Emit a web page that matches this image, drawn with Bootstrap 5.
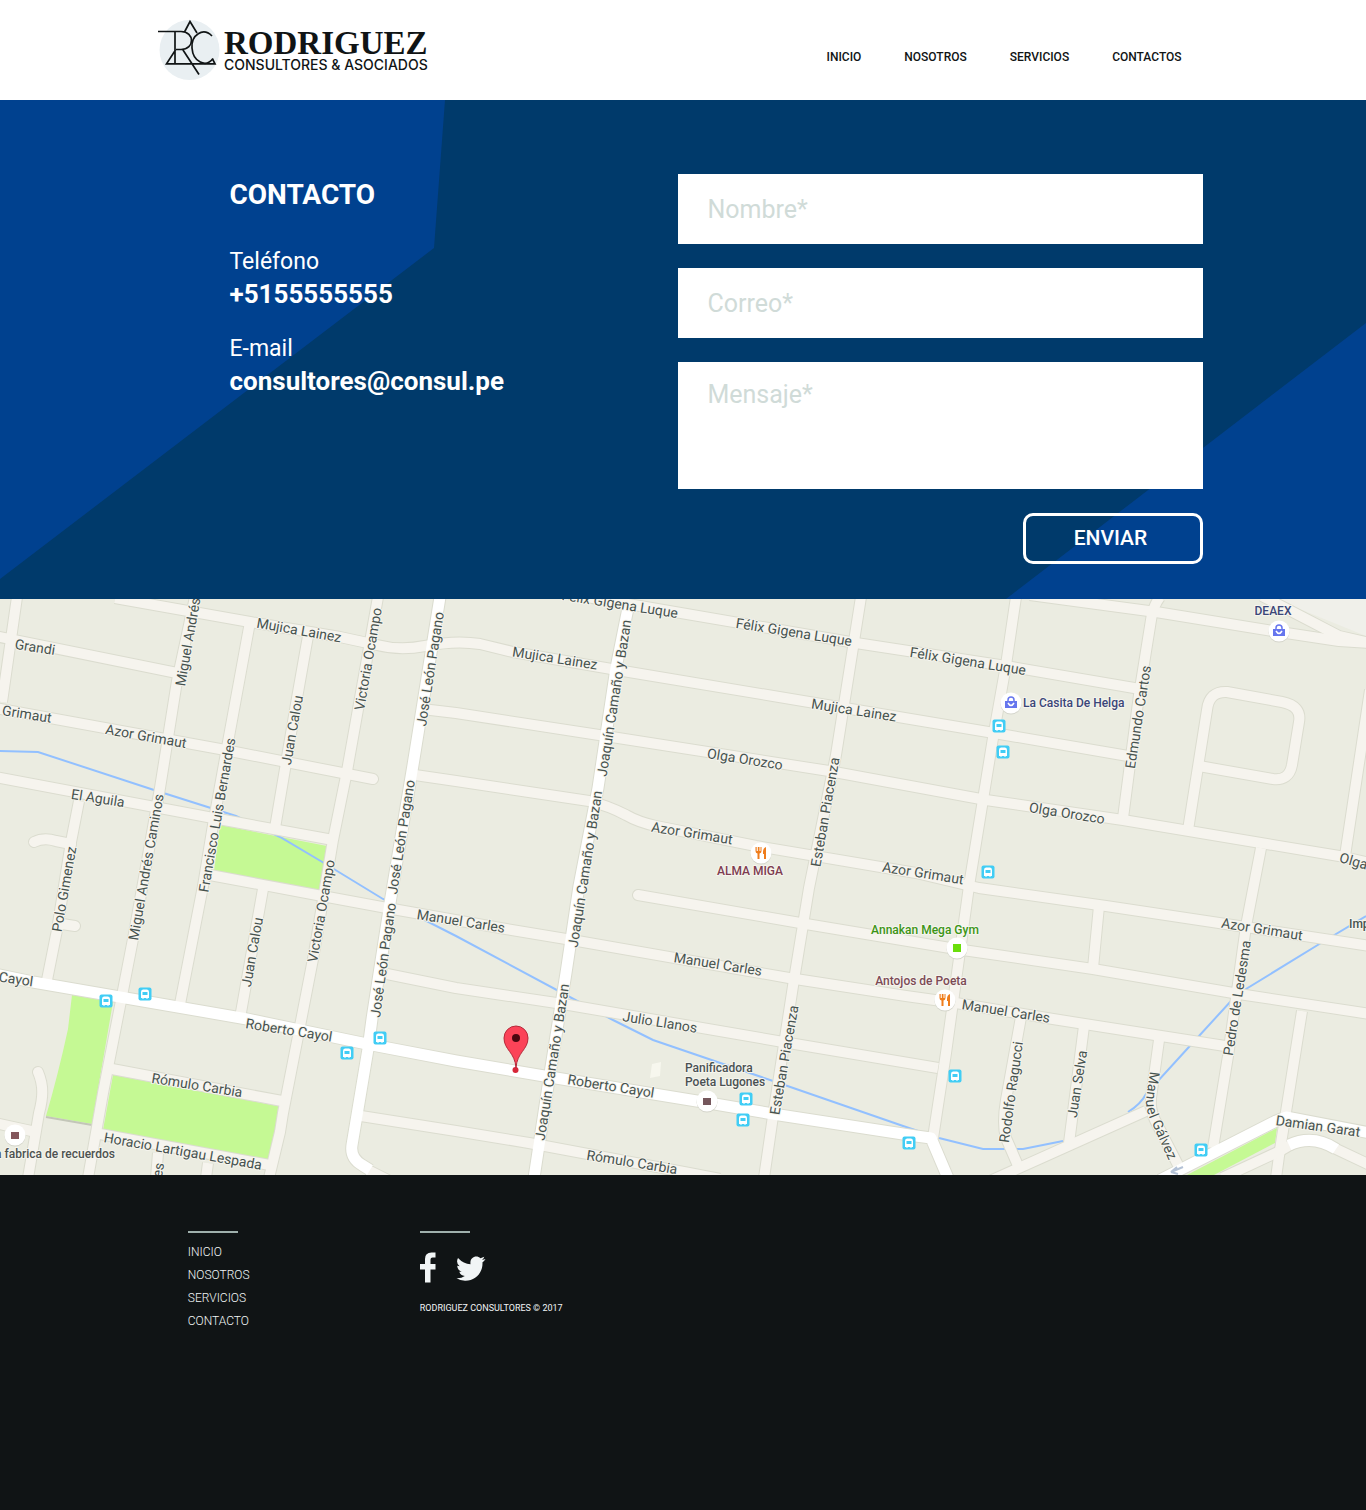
<!DOCTYPE html>
<html lang="es">
<head>
<meta charset="utf-8">
<meta name="viewport" content="width=device-width, initial-scale=1">
<title>Rodriguez Consultores &amp; Asociados - Contacto</title>
<link href="https://cdn.jsdelivr.net/npm/bootstrap@5.3.0/dist/css/bootstrap.min.css" rel="stylesheet">
<style>
body{font-family:Roboto,"Liberation Sans",sans-serif;background:#101415}
.site-header{background:#fff;min-height:100px;padding:0 13.5% 0 11.6%}
.site-logo{width:280px;height:64px;display:block}
.logo-name{font:bold 33px "Liberation Serif",serif;fill:#101415}
.logo-sub{font:500 14px Inter,sans-serif;fill:#101415}
.site-menu{gap:43px;padding-top:13px}
.site-menu .nav-link{padding:0;font-size:12px;font-weight:500;line-height:20px;color:#101415}
.site-menu .nav-link:hover{color:#00418f}
.contact-band{background:#003a6b;color:#fff;padding:74px 11.9% 35px 16.8%}
.contact-shapes{fill:#00418f}
.contact-inner{position:relative}
.contact-data{flex:1 1 280px}
.contact-form{flex:0 1 525px;display:flex;flex-direction:column;gap:24px}
.contact-title{font-size:28px;font-weight:700;line-height:42px;margin-bottom:30px}
.data-label{font-size:23px;line-height:32px}
.data-value{font-size:26px;line-height:32px;font-weight:700;margin-bottom:23px}
.data-value a{color:#fff;text-decoration:none}
.contact-form .form-control{border:0;border-radius:0;height:70px;padding:0 29px;font-size:25px;line-height:32px;color:#003a6b}
.contact-form textarea.form-control{height:127px;padding:17px 29px;resize:none}
.contact-form .form-control::placeholder{color:#d0dbd8}
.btn-send{width:180px;height:51px;border:3px solid #fff;border-radius:10px;color:#fff;font-size:21px;font-weight:500;line-height:1;padding:0 6px 0 0}
.btn-send:hover{background:#fff;color:#003a6b}
.street-map{display:block;width:100%;height:auto;background:#ebece1}
.street-map text{font-family:Roboto,sans-serif;paint-order:stroke;stroke:#f6f5ee;stroke-width:2px;stroke-linejoin:round}
.streets text{font-size:14px;fill:#46524f;text-anchor:middle;dominant-baseline:central}
.streets .from-start{text-anchor:start}
.places text{font-size:12px;font-weight:500;text-anchor:middle}
.places .from-start{text-anchor:start}
.places .from-end{text-anchor:end}
.site-footer{background:#101415;color:#f1f5f6;padding:56px 13.5% 24px 13.75%;min-height:335px}
.footer-col{width:232px}
.footer-rule{width:50px;height:2px;background:#9fb0ac}
.footer-menu{padding-top:8px}
.footer-menu a{display:block;font-size:12px;font-weight:300;line-height:23px;color:#f1f5f6;text-decoration:none}
.footer-social{gap:20px;padding-top:19px;padding-bottom:18px}
.footer-social a{display:block;color:#f1f5f6}
.footer-social svg{display:block;fill:currentColor}
.footer-copy{font-size:9px;line-height:14px;white-space:nowrap}
</style>
<script src="https://cdn.jsdelivr.net/npm/bootstrap@5.3.0/dist/js/bootstrap.bundle.min.js"></script>
</head>
<body class="d-flex flex-column min-vh-100">

<header class="site-header d-flex flex-wrap align-items-center justify-content-between">
  <a href="#" aria-label="Rodriguez Consultores y Asociados">
    <svg class="site-logo" viewBox="158 18 280 64">
      <circle cx="189.500" cy="50" r="30" fill="#e9eff2"/>
      <g fill="none" stroke="#101415" stroke-width="1.700">
        <path d="M158 31.500H181C195 31.500 195 49.500 181 49.500H176M175 32V63.500M183 50L199 74.500M184.500 32L190 21.500L197 33M175.500 50L166.500 63.800H215L212.500 59"/>
        <path d="M212 36C203 27 191 35 192 48C193 62 206 68 213 58.500"/>
      </g>
      <text class="logo-name" x="224" y="54">RODRIGUEZ</text>
      <text class="logo-sub" x="224" y="70">CONSULTORES &amp; ASOCIADOS</text>
    </svg>
  </a>
  <nav class="nav site-menu">
    <a class="nav-link" href="#">INICIO</a>
    <a class="nav-link" href="#">NOSOTROS</a>
    <a class="nav-link" href="#">SERVICIOS</a>
    <a class="nav-link" href="#">CONTACTOS</a>
  </nav>
</header>

<main>
  <section class="contact-band position-relative">
    <svg class="contact-shapes position-absolute top-0 start-0 w-100 h-100" viewBox="0 0 1366 499" preserveAspectRatio="none" aria-hidden="true">
      <path d="M0 0H445L434 148L0 479ZM1366 223V499H1006Z"/>
    </svg>
    <div class="contact-inner d-flex flex-wrap justify-content-between">
      <div class="contact-data">
        <h1 class="contact-title">CONTACTO</h1>
        <div class="data-label">Teléfono</div>
        <div class="data-value"><a href="tel:+5155555555">+5155555555</a></div>
        <div class="data-label">E-mail</div>
        <div class="data-value"><a href="mailto:consultores@consul.pe">consultores@consul.pe</a></div>
      </div>
      <form class="contact-form">
        <input class="form-control" type="text" placeholder="Nombre*" aria-label="Nombre">
        <input class="form-control" type="email" placeholder="Correo*" aria-label="Correo">
        <textarea class="form-control" placeholder="Mensaje*" aria-label="Mensaje"></textarea>
        <button class="btn btn-send align-self-end" type="button">ENVIAR</button>
      </form>
    </div>
  </section>

  <svg class="street-map" viewBox="0 599 1366 576" role="img" aria-label="Mapa de ubicación">
    <defs>
      <g id="minor">
        <path d="M115 598L250 622L340 637L377 645Q400 651 425 646Q456 640 480 644L513 652L623 671L809 702L994 733L1128 756"/>
        <path d="M569 594L640 606L856 643L1006 666L1140 689"/>
        <path d="M1030 595L1156 612L1273 631L1339 641L1370 643"/>
        <path d="M1262 596L1339 636L1370 643"/>
        <path d="M-5 636L177 673M17 597L2 702"/>
        <path d="M-5 708L220 749L373 779" stroke-linecap="round"/>
        <path d="M-5 777L213 818L333 840"/>
        <path d="M195 597L177 681L160 788L133 939L120 1006L103 1093L88 1178"/>
        <path d="M250 622L230 731L213 825L203 886L180 1004"/>
        <path d="M308 636L297 698L275 828M263 889L240 1018"/>
        <path d="M378 597L347 771L333 840L313 959L300 1026L283 1113L280 1132L269 1178"/>
        <path d="M79 801L71 842L57 930L47 980"/>
        <path d="M34 842Q44 837 56 841L71 844M62 924L75 926" stroke-linecap="round"/>
        <path d="M210 875L333 898L387 908L506 929L566 939L789 978L906 996L956 1003L1053 1019L1225 1046"/>
        <path d="M112 1069L282 1101M100 1134L275 1166M-5 1123L36 1132M158 1153L156 1178M208 1163L206 1178"/>
        <path d="M38 1072C44 1086 43 1098 39 1113L28 1178" stroke-linecap="round"/>
        <path d="M422 709L456 713L599 735L829 771L986 800L1123 820L1189 831L1339 856L1370 863"/>
        <path d="M415 775L456 781L589 801Q609 806 626 815Q638 822 656 826L756 846L916 873L979 888L1106 906L1239 926L1370 946"/>
        <path d="M638 895L806 924L956 949L1093 969L1239 994L1370 1014" stroke-linecap="round"/>
        <path d="M387 974L456 988L563 1004L789 1043L938 1068"/>
        <path d="M361 1116L456 1131L529 1143L689 1173L720 1179M368 1170L388 1180"/>
        <path d="M861 597L836 755L809 888L793 986L773 1116L764 1178"/>
        <path d="M1016 597L1006 665L993 738L969 886L946 1053L933 1138"/>
        <path d="M1160 597Q1153 606 1151 620L1139 695L1123 818"/>
        <path d="M1188 830L1207 710Q1209 691 1227 692L1282 702Q1302 706 1299 722L1292 765Q1289 781 1273 779L1199 766"/>
        <path d="M1370 690L1345 856M1261 848L1246 926L1228 1056L1213 1148"/>
        <path d="M1099 906L1093 968M1302 1011L1279 1156L1276 1178"/>
        <path d="M1021 1017L1006 1100Q1002 1124 1006 1138L1019 1168M1084 1026L1069 1143"/>
        <path d="M1159 1040L1151 1098Q1150 1110 1155 1120L1178 1165"/>
        <path d="M990 1181L1146 1111M1222 1178L1280 1151L1292 1144M1334 1148L1370 1165"/>
      </g>
      <g id="major">
        <path d="M440 597L413 765L390 903L372 1019L368 1049L352 1145Q350 1158 362 1165L370 1170"/>
        <path d="M-5 974L33 982L247 1019L367 1044L456 1061L556 1078L709 1103L773 1114L916 1136L931 1138L948 1178"/>
        <path d="M628 608L616 668L598 788L579 886L566 973L548 1086L534 1178"/>
        <path d="M1160 1180L1276 1121L1286 1117L1370 1133M1289 1145Q1313 1134 1336 1149"/>
      </g>
      <g id="bus">
        <rect x="-6.500" y="-6.500" width="13" height="13" rx="2" fill="#41cdf5"/>
        <path d="M-4 4V-2Q-4 -4.500 -2 -4.500H2Q4 -4.500 4 -2V4H2.500V5H1.500V4H-1.500V5H-2.500V4Z" fill="#fff"/>
        <path d="M-2.500 -2H2.500V1H-2.500Z" fill="#41cdf5"/>
      </g>
      <g id="disc">
        <circle cy="1" r="10.500" fill="#d4d5cb"/>
        <circle r="10.500" fill="#fff"/>
      </g>
      <g id="fork">
        <use href="#disc"/>
        <path d="M-5.500 -6V-2Q-5.500 0 -3.500 .5V6H-1.500V.5Q.5 0 .5 -2V-6H-.5V-2H-1.500V-6H-3.200V-2H-4.300V-6ZM5 -6Q2 -5 2 -1V1H3V6H5Z" fill="#ef7d1c"/>
      </g>
      <g id="bag">
        <use href="#disc"/>
        <path d="M-6 -2H6V5H-6Z" fill="#6676ee"/>
        <path d="M-3 -2V-3Q-3 -6 0 -6Q3 -6 3 -3V-2" fill="none" stroke="#6676ee" stroke-width="1.500"/>
        <path d="M-3 0Q0 5 3 0" fill="none" stroke="#fff" stroke-width="1.500"/>
      </g>
    </defs>

    <path d="M1275 599H1366V636Z" fill="#f0f0ea"/>
    <g fill="#c5f994">
      <path d="M220 825L327 846L320 890L214 871Z"/>
      <path d="M72 995L113 1002L92 1124L46 1116Q58 1075 68 1029Z"/>
      <path d="M113 1075L278 1106Q278 1138 267 1162L103 1130Z"/>
      <path d="M1187 1175L1277 1128L1275 1143L1214 1175Z"/>
    </g>
    <path d="M46 1117L92 1125" stroke="#c3c6b8" stroke-width="2"/>
    <g fill="none" stroke="#92c0ff" stroke-width="2">
      <path d="M0 751L38 752L154 790L236 816L280 837L324 863L383 899L456 936L581 1003L613 1020L653 1040L773 1081L906 1127L939 1138L983 1149H1023L1063 1141"/>
      <path d="M1128 1112Q1141 1104 1146 1094L1188 1048L1231 1001L1246 989L1321 943L1366 916"/>
    </g>
    <g fill="none" stroke-linejoin="round">
      <use href="#minor" stroke="#dbdccf" stroke-width="12"/>
      <use href="#major" stroke="#dbdccf" stroke-width="13"/>
      <use href="#minor" stroke="#f6f4ee" stroke-width="10"/>
      <use href="#major" stroke="#fff" stroke-width="11"/>
    </g>
    <path d="M652 1064L661 1062L660 1076L650 1078Z" fill="#f7f7ee"/>
    <path d="M1183 1167L1171 1172L1177 1167M1171 1172L1178 1174" fill="none" stroke="#b4c2d6" stroke-width="2"/>

    <g class="streets">
      <text transform="translate(299 630) rotate(10)">Mujica Lainez</text>
      <text transform="translate(35 647) rotate(9)">Grandi</text>
      <text transform="translate(27 714) rotate(9)">Grimaut</text>
      <text transform="translate(146 736) rotate(10)">Azor Grimaut</text>
      <text transform="translate(98 798) rotate(9)">El Aguila</text>
      <text class="from-start" transform="translate(180 686) rotate(-80)">Miguel Andrés</text>
      <text transform="translate(146 867) rotate(-80)">Miguel Andrés Caminos</text>
      <text transform="translate(217 815) rotate(-80)">Francisco Luis Bernardes</text>
      <text transform="translate(292 730) rotate(-80)">Juan Calou</text>
      <text transform="translate(252 952) rotate(-80)">Juan Calou</text>
      <text transform="translate(368 659) rotate(-80)">Victoria Ocampo</text>
      <text transform="translate(321 911) rotate(-80)">Victoria Ocampo</text>
      <text transform="translate(430 669) rotate(-81)">José León Pagano</text>
      <text transform="translate(401 837) rotate(-81)">José León Pagano</text>
      <text transform="translate(383 960) rotate(-82)">José León Pagano</text>
      <text transform="translate(64 889) rotate(-80)">Polo Gimenez</text>
      <text transform="translate(620 604) rotate(9)">Félix Gigena Luque</text>
      <text transform="translate(794 632) rotate(9)">Félix Gigena Luque</text>
      <text transform="translate(968 661) rotate(9)">Félix Gigena Luque</text>
      <text transform="translate(614 698) rotate(-81)">Joaquín Camaño y Bazan</text>
      <text transform="translate(585 869) rotate(-81)">Joaquín Camaño y Bazan</text>
      <text transform="translate(552 1062) rotate(-81)">Joaquín Camaño y Bazan</text>
      <text transform="translate(555 658) rotate(9)">Mujica Lainez</text>
      <text transform="translate(854 710) rotate(9)">Mujica Lainez</text>
      <text transform="translate(745 759) rotate(9)">Olga Orozco</text>
      <text transform="translate(1067 813) rotate(9)">Olga Orozco</text>
      <text class="from-start" transform="translate(1340 857) rotate(16)">Olga</text>
      <text transform="translate(692 833) rotate(9)">Azor Grimaut</text>
      <text transform="translate(923 873) rotate(9)">Azor Grimaut</text>
      <text transform="translate(1262 929) rotate(9)">Azor Grimaut</text>
      <text transform="translate(825 812) rotate(-80)">Esteban Piacenza</text>
      <text transform="translate(784 1060) rotate(-80)">Esteban Piacenza</text>
      <text transform="translate(1138 717) rotate(-81)">Edmundo Cartos</text>
      <text transform="translate(461 921) rotate(9)">Manuel Carles</text>
      <text transform="translate(718 964) rotate(9)">Manuel Carles</text>
      <text transform="translate(1006 1011) rotate(9)">Manuel Carles</text>
      <text transform="translate(660 1022) rotate(9)">Julio Llanos</text>
      <text transform="translate(16 979) rotate(8)">Cayol</text>
      <text transform="translate(289 1030) rotate(9)">Roberto Cayol</text>
      <text transform="translate(611 1086) rotate(9)">Roberto Cayol</text>
      <text transform="translate(197 1085) rotate(9)">Rómulo Carbia</text>
      <text transform="translate(632 1162) rotate(9)">Rómulo Carbia</text>
      <text transform="translate(183 1151) rotate(10)">Horacio Lartigau Lespada</text>
      <text transform="translate(158 1170) rotate(-80)">es</text>
      <text transform="translate(1011 1092) rotate(-82)">Rodolfo Ragucci</text>
      <text transform="translate(1077 1084) rotate(-81)">Juan Selva</text>
      <text transform="translate(1237 998) rotate(-81)">Pedro de Ledesma</text>
      <text transform="translate(1318 1126) rotate(8)">Damian Garat</text>
      <path id="galvez" d="M1155 1072L1151 1100Q1151 1110 1156 1120L1182 1178" fill="none"/>
      <text class="from-start"><textPath href="#galvez">Manuel Gálvez</textPath></text>
    </g>

    <g class="places">
      <use href="#bus" x="106" y="1001"/><use href="#bus" x="145" y="994"/>
      <use href="#bus" x="347" y="1053"/><use href="#bus" x="380" y="1038"/>
      <use href="#bus" x="746" y="1099"/><use href="#bus" x="743" y="1120"/>
      <use href="#bus" x="909" y="1143"/><use href="#bus" x="955" y="1076"/>
      <use href="#bus" x="1201" y="1150"/><use href="#bus" x="988" y="872"/>
      <use href="#bus" x="999" y="726"/><use href="#bus" x="1003" y="752"/>
      <use href="#disc" x="15" y="1135"/><path d="M11 1132H19V1139H11Z" fill="#84575c"/>
      <use href="#disc" x="707" y="1101"/><path d="M703 1098H711V1105H703Z" fill="#75575c"/>
      <use href="#disc" x="957" y="948"/><path d="M953 944H961V952H953Z" fill="#6ade0c"/>
      <use href="#fork" x="761" y="853"/><use href="#fork" x="945" y="1000"/>
      <use href="#bag" x="1279" y="631"/><use href="#bag" x="1011" y="703"/>
      <text class="from-end" x="115" y="1158" fill="#4d5251">a fabrica de recuerdos</text>
      <text x="750" y="875" fill="#7d3c50">ALMA MIGA</text>
      <text x="925" y="934" fill="#3c9416">Annakan Mega Gym</text>
      <text x="921" y="985" fill="#7b4a55">Antojos de Poeta</text>
      <text class="from-start" x="685" y="1072" fill="#4a5153">Panificadora</text>
      <text class="from-start" x="685" y="1086" fill="#4a5153">Poeta Lugones</text>
      <text x="1273" y="615" fill="#3b4678">DEAEX</text>
      <text class="from-start" x="1023" y="707" fill="#3b4678">La Casita De Helga</text>
      <text class="from-start" x="1349" y="928" fill="#46524f">Imp</text>
      <circle cx="515.500" cy="1070" r="3" fill="#d72638"/>
      <path d="M516 1068C515 1052 504 1050 504 1038A12 12 0 0 1 528 1038C528 1050 517 1052 516 1068Z" fill="#fb4358" stroke="#b5293a" stroke-width="1"/>
      <circle cx="516" cy="1038" r="4" fill="#4b0710"/>
    </g>
  </svg>
</main>

<footer class="site-footer flex-grow-1 d-flex flex-wrap align-items-start">
  <div class="footer-col">
    <div class="footer-rule"></div>
    <nav class="footer-menu">
      <a href="#">INICIO</a>
      <a href="#">NOSOTROS</a>
      <a href="#">SERVICIOS</a>
      <a href="#">CONTACTO</a>
    </nav>
  </div>
  <div class="footer-col">
    <div class="footer-rule"></div>
    <div class="footer-social d-flex">
      <a href="#" aria-label="Facebook"><svg width="16" height="31" viewBox="0 0 16 31"><path d="M15.500 .5V5.500H12.500Q10.500 5.500 10.500 7.500V12H15.500V17.500H10.500V30.500H5V17.500H0V12H5V7Q5 .5 11.500 .5Z"/></svg></a>
      <a href="#" aria-label="Twitter"><svg width="30" height="31" viewBox="0 0 30 31"><path d="M29.500 7Q28 9.500 26.500 10.300C27 21 19 29 9 28.700Q4 28.600 .5 26.300Q5.500 26.500 8.800 24Q4.500 23.500 3.300 19.800H5.700Q1.500 18 1.200 13.700L3.600 14.300Q-.5 11 2 6Q7.500 12 14.500 12.200C13.500 5 20.500 2.500 24.500 6.200L28.300 4.800Q27.700 6.800 26 7.900Z"/></svg></a>
    </div>
    <div class="footer-copy">RODRIGUEZ CONSULTORES © 2017</div>
  </div>
</footer>
</body>
</html>
